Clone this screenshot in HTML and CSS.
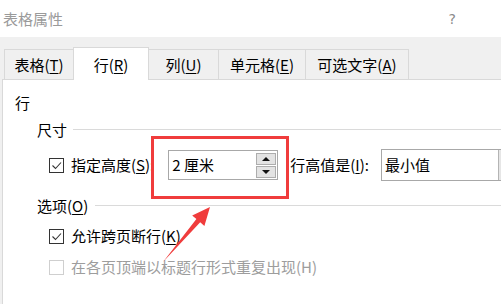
FILE: index.html
```html
<!DOCTYPE html>
<html lang="zh-CN">
<head>
<meta charset="utf-8">
<title>表格属性</title>
<link rel="stylesheet" href="styles.css">
</head>
<body>
<div class="dialog">
  <div class="titlebar">
    <span class="title">表格属性</span>
    <span class="help">?</span>
  </div>
  <div class="tabs">
    <div class="tab tab-table">表格(<u>T</u>)</div>
    <div class="tab tab-row active">行(<u>R</u>)</div>
    <div class="tab tab-col">列(<u>U</u>)</div>
    <div class="tab tab-cell">单元格(<u>E</u>)</div>
    <div class="tab tab-alt">可选文字(<u>A</u>)</div>
  </div>
  <div class="panel">
    <div class="section-title">行</div>
    <div class="group-head head-size"><span>尺寸</span><span class="rule"></span></div>
    <div class="row size-row">
      <span class="cb checked"><svg viewBox="0 0 13 13" width="13" height="13"><polyline points="2.5,6.5 5.5,9.5 11,3.5" fill="none" stroke="#333" stroke-width="1.1"/></svg></span>
      <span class="label">指定高度(<u>S</u>):</span>
      <div class="spin-wrap">
        <div class="spin">
          <span class="spin-val">2 厘米</span>
          <div class="spin-btns">
            <span class="sb up"></span>
            <span class="sb down"></span>
          </div>
        </div>
        <div class="annot-box"></div>
      </div>
      <span class="label label-type">行高值是(<u>I</u>):</span>
      <div class="select">
        <span class="select-val">最小值</span>
        <span class="select-btn"></span>
      </div>
    </div>
    <div class="group-head head-opt"><span>选项(<u>O</u>)</span><span class="rule"></span></div>
    <div class="row opt-row opt-first">
      <span class="cb checked"><svg viewBox="0 0 13 13" width="13" height="13"><polyline points="2.5,6.5 5.5,9.5 11,3.5" fill="none" stroke="#333" stroke-width="1.1"/></svg></span>
      <span class="label">允许跨页断行(<u>K</u>)</span>
    </div>
    <div class="row opt-row opt-second disabled">
      <span class="cb"></span>
      <span class="label">在各页顶端以标题行形式重复出现(H)</span>
    </div>
  </div>
  <svg class="arrow" viewBox="0 0 501 304" width="501" height="304">
    <polygon points="163,262 196.4,219.1 192.2,215.5 210,207 204.4,225.9 200.2,222.3" fill="#f03c3c"/>
  </svg>
</div>
</body>
</html>
```
FILE: styles.css
```css
* { box-sizing: border-box; }
html, body {
  margin: 0;
  padding: 0;
}
body {
  width: 501px;
  height: 304px;
  overflow: hidden;
  background: #f0f0f0;
  font-family: "Noto Sans CJK SC", "Noto Sans", sans-serif;
  font-size: 15px;
  line-height: 20px;
  color: #000;
}
u { text-decoration: underline; text-underline-offset: 2px; text-decoration-thickness: 1px; }

.dialog {
  position: relative;
  width: 501px;
  height: 304px;
  display: flex;
  flex-direction: column;
}

.titlebar {
  height: 37px;
  background: #fff;
  display: flex;
  align-items: center;
  padding-left: 3px;
  flex-shrink: 0;
}
.title { color: #9a9a9a; }
.help {
  margin-left: auto;
  margin-right: 45px;
  color: #8a8a8a;
  font-family: "DejaVu Sans", sans-serif;
  font-size: 14px;
}

.tabs {
  height: 43px;
  flex-shrink: 0;
  margin-left: 2px;
  padding-left: 2px;
  border-bottom: 1px solid #d9d9d9;
  display: flex;
  align-items: flex-end;
}
.tab {
  height: 30px;
  border: 1px solid #d9d9d9;
  border-bottom: none;
  margin-right: -1px;
  display: flex;
  align-items: center;
  justify-content: center;
  padding-top: 1px;
  background: #f0f0f0;
}
.tab.active {
  position: relative;
  z-index: 1;
  height: 33px;
  margin-bottom: -1px;
  background: #fff;
  padding-bottom: 0;
}
.tab-table { width: 70px; }
.tab-row { width: 76px; }
.tab-col { width: 71px; }
.tab-cell { width: 88px; }
.tab-alt { width: 104px; }

.panel {
  flex: 1;
  margin-left: 2px;
  border-left: 1px solid #d9d9d9;
  background: #fff;
  padding: 13px 0 0 12px;
}

.section-title { height: 20px; }

.group-head {
  display: flex;
  align-items: center;
  height: 20px;
  margin-left: 22px;
}
.group-head .rule {
  flex: 1;
  height: 1px;
  background: #dadada;
  margin-top: -1px;
}
.head-size { margin-top: 7px; }
.head-size .rule { margin-left: 6px; }
.head-opt { margin-top: 15px; }
.head-opt .rule { margin-left: 7px; }

.row {
  display: flex;
  align-items: center;
  margin-left: 34px;
}
.size-row { margin-top: 9px; height: 32px; }
.opt-row { height: 20px; }
.opt-first { margin-top: 10px; }
.opt-second { margin-top: 11px; }

.cb {
  width: 15px;
  height: 15px;
  border: 1px solid #333;
  background: #fff;
  display: flex;
  align-items: center;
  justify-content: center;
  flex-shrink: 0;
  margin-right: 7px;
}
.disabled .cb { border-color: #cfcfcf; }
.disabled .label { color: #9d9d9d; }

.label { white-space: nowrap; }

.spin-wrap {
  position: relative;
  margin-left: 14px;
  flex-shrink: 0;
}
.spin {
  width: 110px;
  height: 30px;
  border: 1px solid #a8a8a8;
  display: flex;
  align-items: center;
  padding-left: 3px;
  background: #fff;
}
.spin-btns {
  margin-left: auto;
  margin-right: 1px;
  display: flex;
  flex-direction: column;
  gap: 1px;
}
.sb {
  width: 20px;
  height: 12px;
  border: 1px solid #adadad;
  background: #e3e3e3;
  display: flex;
  align-items: center;
  justify-content: center;
}
.sb::after {
  content: "";
  width: 0;
  height: 0;
  border-left: 4px solid transparent;
  border-right: 4px solid transparent;
}
.sb.up::after { border-bottom: 4px solid #111; }
.sb.down::after { border-top: 4px solid #111; }

.annot-box {
  position: absolute;
  top: -14px;
  left: -17px;
  right: -11px;
  bottom: -19px;
  border: 3px solid #f03c3c;
  pointer-events: none;
}

.label-type { margin-left: 12px; }

.select {
  margin-left: 12px;
  width: 140px;
  height: 32px;
  border: 1px solid #a8a8a8;
  display: flex;
  align-items: center;
  flex-shrink: 0;
  background: #fff;
}
.select-val { padding-left: 3px; width: 116px; }
.select-btn {
  align-self: stretch;
  flex: 1;
  border-left: 1px solid #b4b4b4;
  background: #e6e6e6;
}

.arrow {
  position: absolute;
  left: 0;
  top: 0;
  pointer-events: none;
}
```
